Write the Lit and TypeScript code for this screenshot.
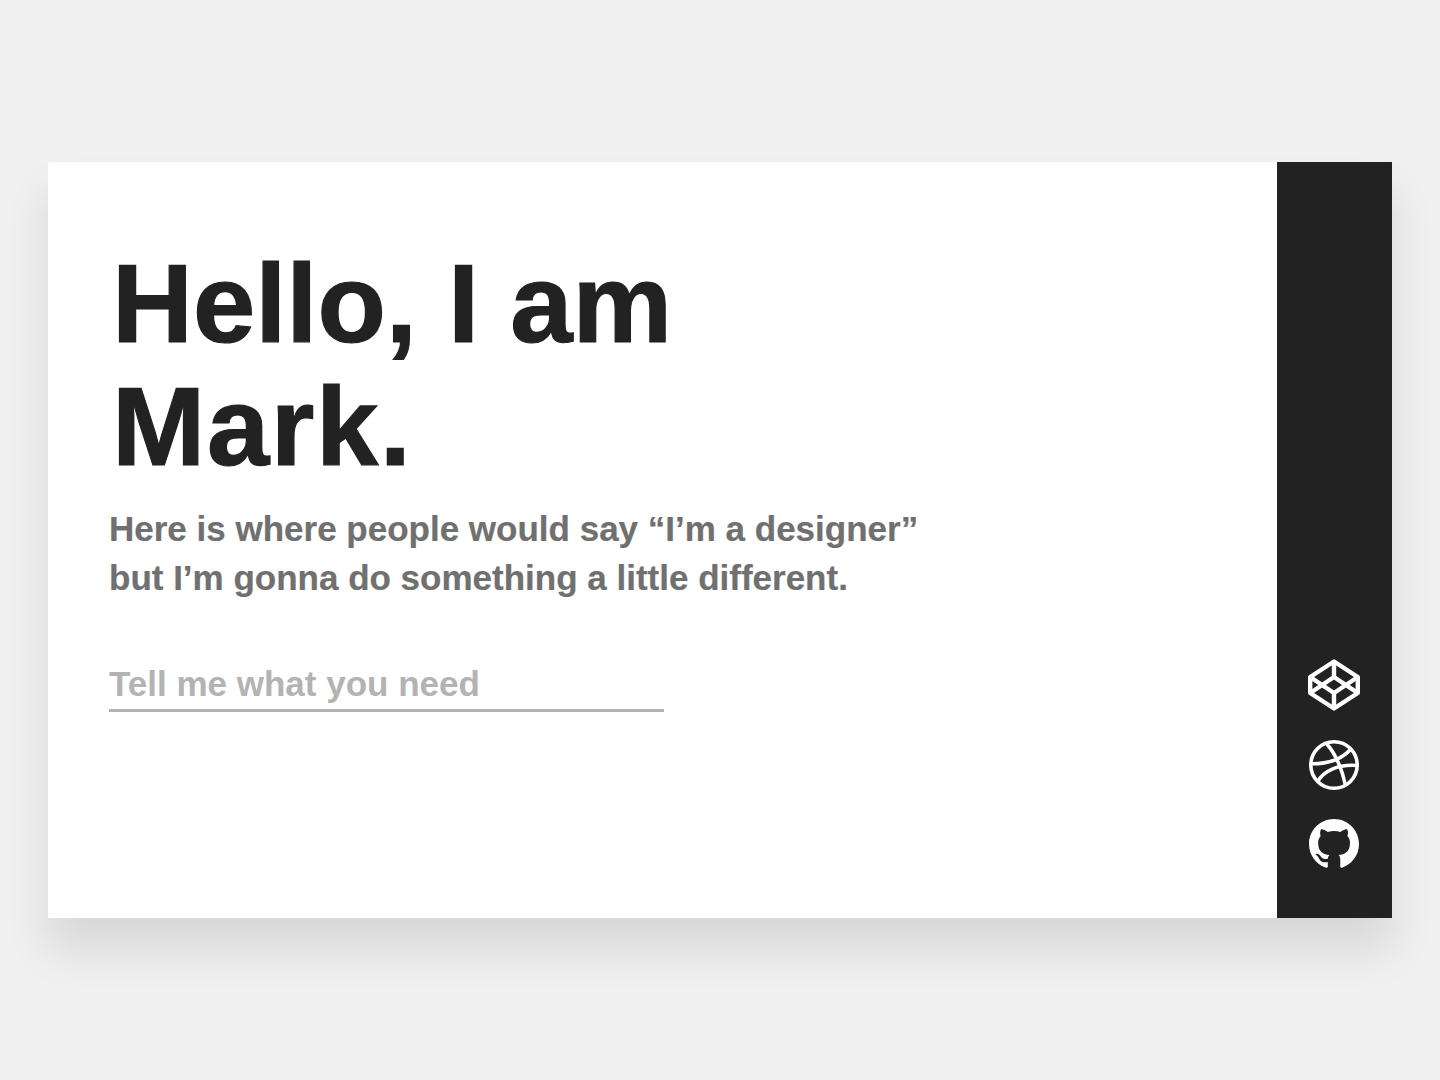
import { LitElement, html, css } from "lit";
import { customElement } from "lit/decorators.js";

@customElement("app-root")
export class AppRoot extends LitElement {
  static styles = css`
    :host {
      display: flex;
      align-items: center;
      box-sizing: border-box;
      height: 1080px;
      padding: 0 48px;
      background: #f0f0f0;
      font-family: "Liberation Sans", Arial, sans-serif;
    }
    .card {
      flex: 1;
      height: 756px;
      display: flex;
      background: #fff;
      box-shadow: 0 32px 40px rgba(0, 0, 0, 0.1);
    }
    .main {
      flex: 1;
      padding: 80px 0 0 61px;
      display: flex;
      flex-direction: column;
      align-items: flex-start;
    }
    h1 {
      margin: 0 0 0 3px;
      font-size: 112px;
      line-height: 123px;
      font-weight: 700;
      color: #222;
      -webkit-text-stroke: 1.2px #222;
    }
    h1 .wide {
      letter-spacing: 1.6px;
    }
    p {
      margin: 16px 0 0;
      font-size: 35px;
      line-height: 49px;
      font-weight: 700;
      color: #707070;
      -webkit-text-stroke: 0.2px #707070;
    }
    input {
      margin-top: 62px;
      width: 555px;
      box-sizing: border-box;
      padding: 0 0 5px;
      border: none;
      border-bottom: 3px solid #b3b3b3;
      outline: none;
      background: none;
      font: 700 35px/40px "Liberation Sans", Arial, sans-serif;
      color: #b3b3b3;
    }
    input::placeholder {
      color: #b3b3b3;
      opacity: 1;
    }
    .side {
      width: 115.5px;
      background: #222;
      display: flex;
      flex-direction: column;
      align-items: center;
      justify-content: flex-end;
      gap: 28px;
      padding-bottom: 49px;
      box-sizing: border-box;
    }
    svg {
      display: block;
      width: 52px;
      height: 52px;
    }
    svg.gh {
      width: 50px;
      height: 50px;
    }
  `;

  render() {
    return html`
      <div class="card">
        <div class="main">
          <h1>Hello, I am<br /><span class="wide">Mark.</span></h1>
          <p>Here is where people would say “I’m a designer”<br />but I’m gonna do something a little different.</p>
          <input type="text" placeholder="Tell me what you need" />
        </div>
        <div class="side">
          <svg viewBox="0 0 52 52" fill="none" stroke="#fff" stroke-width="4.4" stroke-linejoin="round">
            <path d="M26 2.5 49.8 18V34L26 49.5 2.2 34V18Z" />
            <path d="M2.2 18 26 34 49.8 18M2.2 34 26 18 49.8 34M26 2.5V18M26 34V49.5" />
          </svg>
          <svg viewBox="0 0 52 52" fill="none" stroke="#fff" stroke-width="3.6">
            <circle cx="26" cy="26" r="23.2" />
            <path d="M3 24.8C20 25 33 21 42.5 10.5M18 4C27 14 34 30 37.5 46.5M9.5 43C15 32 30 25 49.3 26.5" />
          </svg>
          <svg class="gh" viewBox="0 0 16 16" fill="#fff">
            <path d="M8 0C3.58 0 0 3.58 0 8c0 3.54 2.29 6.53 5.47 7.59.4.07.55-.17.55-.38 0-.19-.01-.82-.01-1.49-2.01.37-2.53-.49-2.69-.94-.09-.23-.48-.94-.82-1.13-.28-.15-.68-.52-.01-.53.63-.01 1.08.58 1.23.82.72 1.21 1.87.87 2.33.66.07-.52.28-.87.51-1.07-1.78-.2-3.64-.89-3.64-3.95 0-.87.31-1.59.82-2.15-.08-.2-.36-1.02.08-2.12 0 0 .67-.21 2.2.82.64-.18 1.32-.27 2-.27.68 0 1.36.09 2 .27 1.53-1.04 2.2-.82 2.2-.82.44 1.1.16 1.92.08 2.12.51.56.82 1.27.82 2.15 0 3.07-1.87 3.75-3.65 3.95.29.25.54.73.54 1.48 0 1.07-.01 1.93-.01 2.2 0 .21.15.46.55.38A8.013 8.013 0 0016 8c0-4.42-3.58-8-8-8z" />
          </svg>
        </div>
      </div>
    `;
  }
}
